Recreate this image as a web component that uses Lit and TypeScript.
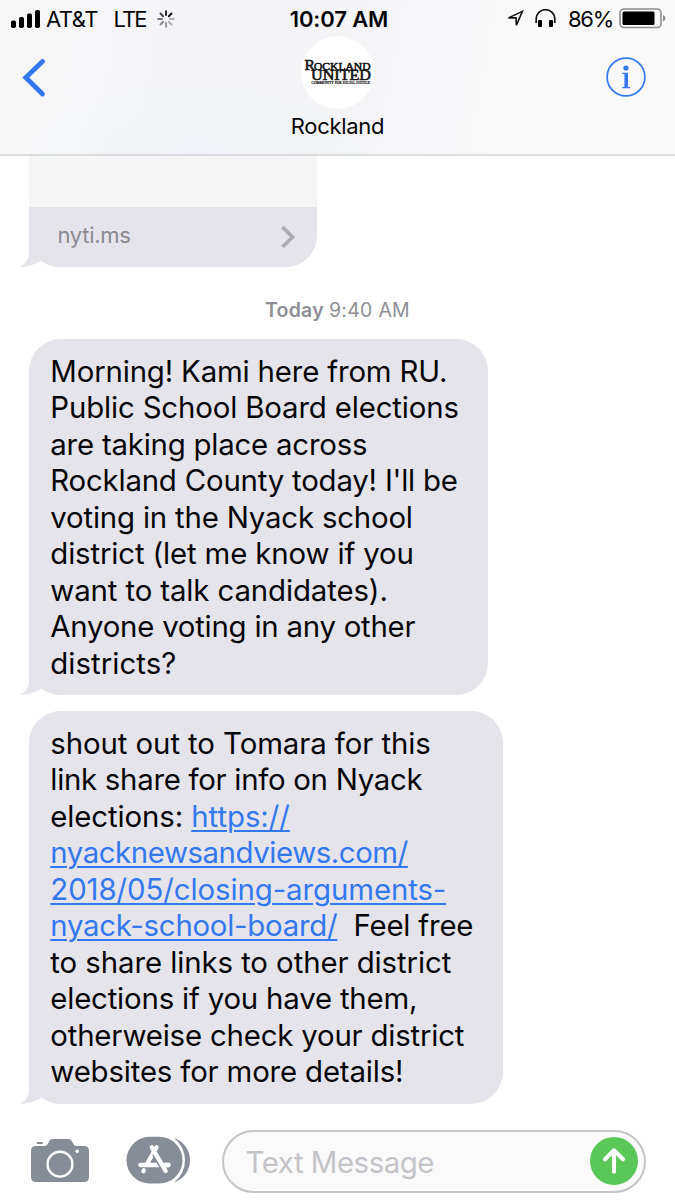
import { LitElement, html, css, svg } from "lit";
import { customElement, property } from "lit/decorators.js";

/** A run of text set to a fixed measure by adjusting its tracking. */
@customElement("fit-text")
class FitText extends LitElement {
  @property({ type: Number }) width = 0;
  @property() text = "";
  static styles = css`
    :host { display: inline-block; white-space: pre; }
    .run { display: inline-block; text-decoration: inherit; }
  `;
  render() {
    return html`<span class="run">${this.text}</span>`;
  }
  updated() {
    const run = this.renderRoot.querySelector(".run") as HTMLElement;
    run.style.letterSpacing = "0";
    const natural = run.getBoundingClientRect().width;
    run.style.letterSpacing = `${(this.width - natural) / this.text.length}px`;
  }
}

interface Part { text: string; width: number; link?: boolean }

const first: Part[][] = [
  [{ text: "Morning! Kami here from RU.", width: 397 }],
  [{ text: "Public School Board elections", width: 408.5 }],
  [{ text: "are taking place across", width: 317 }],
  [{ text: "Rockland County today! I'll be", width: 407.5 }],
  [{ text: "voting in the Nyack school", width: 362.5 }],
  [{ text: "district (let me know if you", width: 363.5 }],
  [{ text: "want to talk candidates).", width: 337.5 }],
  [{ text: "Anyone voting in any other", width: 365 }],
  [{ text: "districts?", width: 126 }],
];

const second: Part[][] = [
  [{ text: "shout out to Tomara for this", width: 380.5 }],
  [{ text: "link share for info on Nyack", width: 372 }],
  [{ text: "elections: ", width: 141 }, { text: "https://", width: 98.5, link: true }],
  [{ text: "nyacknewsandviews.com/", width: 357.5, link: true }],
  [{ text: "2018/05/closing-arguments-", width: 396, link: true }],
  [{ text: "nyack-school-board/", width: 287, link: true }, { text: "  Feel free", width: 136 }],
  [{ text: "to share links to other district", width: 401 }],
  [{ text: "elections if you have them,", width: 367 }],
  [{ text: "otherweise check your district", width: 414 }],
  [{ text: "websites for more details!", width: 353 }],
];

const tail = html`<svg class="tail" width="44" height="40" viewBox="0 0 44 40">
  <path d="M9 0V26C9 32 6 37 0 39.6C8 40 16 37 22.5 33.2C27 37 34 40 44 40V0Z" fill="#e5e4ea" />
</svg>`;

@customElement("app-root")
class AppRoot extends LitElement {
  static styles = css`
    :host {
      display: flex; flex-direction: column; box-sizing: border-box;
      width: 675px; height: 1200px; overflow: hidden; background: #fff; color: #050507;
      font-family: Inter, "Liberation Sans", sans-serif;
    }
    svg { display: block; flex: none; }
    header {
      height: 156px; box-sizing: border-box; flex: none; border-bottom: 2px solid #dcdde0;
      background: radial-gradient(ellipse 170px 70px at 200px 150px, #f1f4f8, transparent),
        linear-gradient(100deg, #f7f7f8, #f3f3f5 38%, #f6f6f8 65%, #f9f9f9 75%);
    }
    .status { height: 37px; display: grid; grid-template-columns: 1fr auto 1fr; align-items: center; font-size: 22px; }
    .left { display: flex; align-items: center; padding-left: 11px; }
    .carrier { margin-left: 6px; }
    .network { margin-left: 15.5px; }
    .spinner { margin-left: 10px; }
    .time { font-weight: 600; font-size: 22px; padding-left: 3px; }
    .right { display: flex; align-items: center; justify-content: flex-end; padding-right: 9px; }
    .phones { margin-left: 11px; }
    .percent { margin-left: 12px; }
    .battery { margin-left: 6px; }
    .nav { display: grid; grid-template-columns: 1fr auto 1fr; align-items: start; }
    .back { margin: 21px 0 0 22px; }
    .info { width: 40px; height: 40px; margin: 20px 29px 0 0; justify-self: end; }
    .contact { display: flex; flex-direction: column; align-items: center; gap: 5px; }
    .avatar { width: 73px; height: 73px; margin-top: -1px; border-radius: 50%; background: #fff; }
    .name { font-size: 22px; line-height: 26px; margin-top: -1px; }
    main { flex: 1; display: flex; flex-direction: column; align-items: flex-start; padding-left: 29px; }
    .card { position: relative; width: 288px; }
    .preview { height: 51px; background: #f5f5f6; }
    .source {
      height: 60px; box-sizing: border-box; display: flex; align-items: center; justify-content: space-between;
      padding: 0 21px 4px 28.5px; background: #e5e4ea; color: #8b8b91; border-radius: 0 0 31px 31px; font-size: 22px;
    }
    .chevron { margin-top: 3px; }
    .stamp { width: 617px; text-align: center; font-size: 19.5px; line-height: 24px; color: #8e8e93; margin: 31px 0 17px; }
    .stamp b { font-weight: 600; }
    .bubble {
      position: relative; box-sizing: border-box; padding: 14.5px 22px 13px 21.3px; border-radius: 32px;
      background: #e5e4ea; font-size: 29.4px; line-height: 36.5px;
    }
    .one { width: 459px; height: 356px; }
    .two { width: 474px; height: 393px; margin-top: 16px; }
    .line { position: relative; z-index: 1; display: flex; height: 36.5px; white-space: pre; }
    .link { color: #3478f0; text-decoration: underline; text-decoration-thickness: 2px; text-underline-offset: 3px; }
    .tail { position: absolute; left: -9px; bottom: 0; }
    .card .source { position: relative; z-index: 0; }
    .source-tail { clip-path: inset(0 20px 0 0); }
    footer { height: 96px; flex: none; display: flex; align-items: flex-start; padding: 26px 29px 0 30.5px; box-sizing: border-box; }
    .camera { margin-top: 9px; }
    .apps { margin: 6px 0 0 37.5px; }
    .field {
      margin-left: 32px; width: 425px; height: 63px; box-sizing: border-box; border: 2px solid #c4c4c9;
      border-radius: 32px; background: #fafafa; display: flex; align-items: center; justify-content: space-between;
      padding: 0 6px 1px 21.5px; color: #c4c4c8; font-size: 29.4px;
    }
    .placeholder { margin-top: 2px; }
  `;

  private lines(rows: Part[][]) {
    return rows.map((row) => html`<div class="line">${row.map((p) =>
      html`<fit-text class=${p.link ? "link" : "plain"} .text=${p.text} .width=${p.width}></fit-text>`)}</div>`);
  }

  render() {
    const shades = ["#222", "#111", "#aaa", "#aaa", "#999", "#888", "#777", "#444"];
    return html`
      <header>
        <div class="status">
          <div class="left">
            <svg width="29" height="18" viewBox="0 0 29 18">
              <rect x="0" y="10.5" width="5" height="7.5" rx="1.8" /><rect x="8" y="7" width="5" height="11" rx="1.8" />
              <rect x="16" y="3.5" width="5" height="14.5" rx="1.8" /><rect x="24" y="0" width="5" height="18" rx="1.8" />
            </svg>
            <fit-text class="carrier" .text=${"AT&T"} .width=${52}></fit-text>
            <fit-text class="network" .text=${"LTE"} .width=${32}></fit-text>
            <svg class="spinner" width="20" height="20" viewBox="-10 -10 20 20">
              ${shades.map((c, i) => svg`<path d="M0 -4V-7.8" transform="rotate(${i * 45})" stroke=${c} stroke-width="2" stroke-linecap="round" />`)}
            </svg>
          </div>
          <fit-text class="time" .text=${"10:07 AM"} .width=${98.5}></fit-text>
          <div class="right">
            <svg width="17" height="17" viewBox="0 0 17 17">
              <path d="M15.4 1.4L1.5 7.9H9L9.4 15.2Z" fill="none" stroke="#111" stroke-width="1.6" stroke-linejoin="miter" />
            </svg>
            <svg class="phones" width="21" height="19" viewBox="0 0 21 19">
              <path d="M1.2 14V9.8A9.2 9 0 0 1 19.8 9.8V14" fill="none" stroke="#111" stroke-width="1.7" />
              <rect x="3" y="11" width="4" height="7" rx="1" /><rect x="14" y="11" width="4" height="7" rx="1" />
            </svg>
            <fit-text class="percent" .text=${"86%"} .width=${45}></fit-text>
            <svg class="battery" width="47" height="21" viewBox="0 0 47 21">
              <rect x="1" y="1" width="41" height="18.5" rx="4" fill="none" stroke="#8d8d90" stroke-width="1.6" />
              <rect x="3.5" y="3.5" width="32" height="13.5" rx="1.5" /><path d="M44 7V13.5Q46.4 12.5 46.4 10.2Q46.4 8 44 7Z" fill="#8d8d90" />
            </svg>
          </div>
        </div>
        <div class="nav">
          <svg class="back" width="24" height="40" viewBox="0 0 24 40">
            <path d="M20.5 3.5L3.8 19.5L20.5 36" fill="none" stroke="#3478f0" stroke-width="4.8" stroke-linecap="round" stroke-linejoin="miter" />
          </svg>
          <div class="contact">
            <svg class="avatar" viewBox="0 0 73 73" font-family="Liberation Serif, serif" fill="#151515" stroke="#151515" stroke-width=".6">
              <text x="3.5" y="34" font-size="15.5" textLength="10.5" lengthAdjust="spacingAndGlyphs">R</text>
              <text x="13" y="34" font-size="11.3" textLength="56.5" lengthAdjust="spacingAndGlyphs">OCKLAND</text>
              <text x="10" y="44" font-size="15" textLength="60" lengthAdjust="spacingAndGlyphs">UNITED</text>
              <text x="10.5" y="47.6" font-size="3.4" stroke-width=".2" textLength="58.5" lengthAdjust="spacingAndGlyphs">COMMUNITY FOR SOCIAL JUSTICE</text>
            </svg>
            <fit-text class="name" .text=${"Rockland"} .width=${93.5}></fit-text>
          </div>
          <svg class="info" viewBox="0 0 40 40">
            <circle cx="20" cy="20" r="18.9" fill="none" stroke="#3478f0" stroke-width="1.7" />
            <circle cx="20" cy="11" r="2.6" fill="#3478f0" />
            <path d="M16.3 15.8H22V30H24V31.2H16.3V30H18.4V17H16.3Z" fill="#3478f0" />
          </svg>
        </div>
      </header>
      <main>
        <div class="card">
          <div class="preview"></div>
          <div class="source">
            <fit-text .text=${"nyti.ms"} .width=${73}></fit-text>
            <svg class="chevron" width="16" height="24" viewBox="0 0 16 24"><path d="M2.5 2L12.5 12L2.5 22" fill="none" stroke="#aaaab0" stroke-width="3.6" /></svg>
            <svg class="tail source-tail" width="44" height="32" viewBox="0 8 44 32">
              <path d="M9 8V26C9 32 6 37 0 39.6C8 40 16 37 22.5 33.2C27 37 34 40 44 40V33H24L20 8Z" fill="#e5e4ea" />
            </svg>
          </div>
        </div>
        <div class="stamp"><b><fit-text .text=${"Today "} .width=${64}></fit-text></b><fit-text .text=${"9:40 AM"} .width=${81}></fit-text></div>
        <div class="bubble one">${this.lines(first)}${tail}</div>
        <div class="bubble two">${this.lines(second)}${tail}</div>
      </main>
      <footer>
        <svg class="camera" width="58" height="44" viewBox="0 0 58 44">
          <rect x="5.5" y="3" width="6.5" height="2" rx="1" fill="#868d97" />
          <path d="M5 7H13Q16 7 17.3 4L18.3 2Q19 0 22 0H37Q39.8 0 40.7 2L42 4.5Q43 7 46 7H53Q58 7 58 12V38Q58 43 53 43H5Q0 43 0 38V12Q0 7 5 7Z" fill="#868d97" />
          <circle cx="29" cy="25.2" r="12.4" fill="none" stroke="#fff" stroke-width="2.4" /><circle cx="46.2" cy="12.2" r="1.8" fill="#fff" />
        </svg>
        <svg class="apps" width="64" height="48" viewBox="0 0 64 48">
          <path d="M48 2A23.5 23.5 0 0 1 48 46.5A28 28 0 0 0 48 2Z" fill="#868d97" />
          <rect x=".5" y=".8" width="56" height="46.8" rx="23.4" fill="#868d97" />
          <path d="M14.4 29H42.5M30.6 11.3L21 28M17.9 34.3L17.4 35.2" stroke="#fff" stroke-width="4.3" stroke-linecap="round" />
          <path d="M29 17.5L38.5 34.2" stroke="#868d97" stroke-width="6.4" />
          <path d="M25.8 11.3L39.7 35M37 29H42.5" stroke="#fff" stroke-width="4.3" stroke-linecap="round" />
        </svg>
        <div class="field">
          <fit-text class="placeholder" .text=${"Text Message"} .width=${188.5}></fit-text>
          <svg width="48" height="48" viewBox="0 0 48 48">
            <circle cx="24" cy="24" r="24" fill="#5ac858" />
            <path d="M24 34.7V14M15 22.3L24 13.3L33 22.3" fill="none" stroke="#fff" stroke-width="4.1" stroke-linecap="round" stroke-linejoin="round" />
          </svg>
        </div>
      </footer>`;
  }
}
